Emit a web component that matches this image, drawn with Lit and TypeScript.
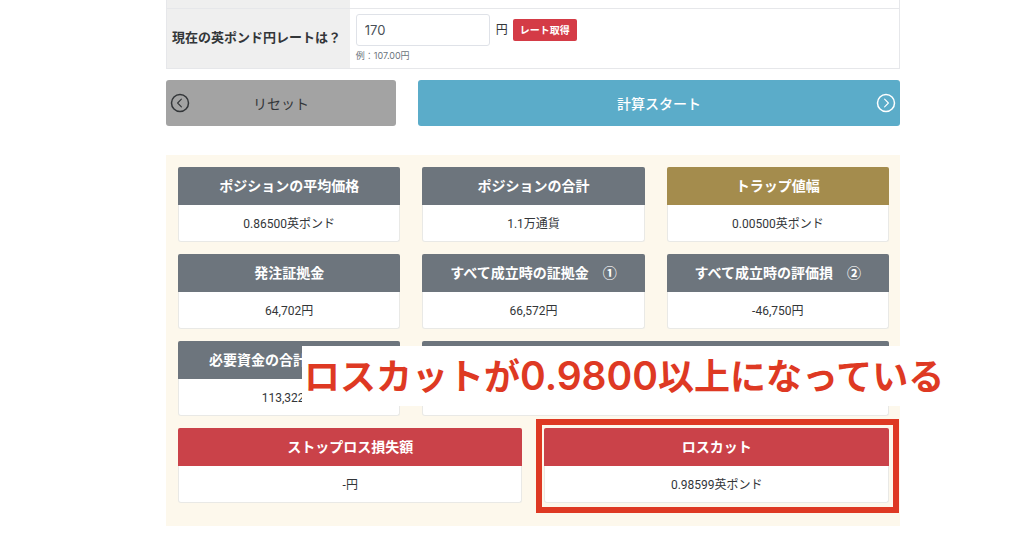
import { LitElement, html, css, nothing } from "lit";
import { customElement, property, state } from "lit/decorators.js";

interface Result {
  title: string;
  value: string;
  tone: "gray" | "gold" | "red";
  span: 2 | 3 | 4;
  marked?: boolean;
}

const RESULTS: Result[] = [
  { title: "ポジションの平均価格", value: "0.86500英ポンド", tone: "gray", span: 2 },
  { title: "ポジションの合計", value: "1.1万通貨", tone: "gray", span: 2 },
  { title: "トラップ値幅", value: "0.00500英ポンド", tone: "gold", span: 2 },
  { title: "発注証拠金", value: "64,702円", tone: "gray", span: 2 },
  { title: "すべて成立時の証拠金　①", value: "66,572円", tone: "gray", span: 2 },
  { title: "すべて成立時の評価損　②", value: "-46,750円", tone: "gray", span: 2 },
  { title: "必要資金の合計　① ＋ ②", value: "113,322円", tone: "gray", span: 2 },
  { title: "", value: "", tone: "gray", span: 4 },
  { title: "ストップロス損失額", value: "-円", tone: "red", span: 3 },
  { title: "ロスカット", value: "0.98599英ポンド", tone: "red", span: 3, marked: true },
];

@customElement("result-card")
class ResultCard extends LitElement {
  @property() heading = "";
  @property() value = "";
  @property() tone = "gray";
  @property({ type: Boolean }) marked = false;

  static styles = css`
    :host {
      display: block;
      position: relative;
    }
    .title {
      margin: 0;
      min-height: 22px;
      padding: 7px 0 9px;
      border-radius: 2px 2px 0 0;
      font-family: "Noto Sans CJK JP", sans-serif;
      font-size: 14px;
      line-height: 22px;
      font-weight: 700;
      text-align: center;
      white-space: pre;
      color: #fff;
    }
    .gray { background: #6d757d; }
    .gold { background: #a48c4d; }
    .red { background: #ca4249; }
    .value {
      margin: 0;
      min-height: 19px;
      padding: 10px 0 7px;
      border: 1px solid #e9e9e6;
      border-top: 0;
      border-radius: 0 0 3px 3px;
      background: #fff;
      font-family: Roboto, "Noto Sans CJK JP", sans-serif;
      font-size: 12px;
      line-height: 19px;
      text-align: center;
      color: #333639;
    }
    .frame {
      position: absolute;
      inset: -9px -10px -10px -8px;
      border: 6px solid #de3923;
      pointer-events: none;
    }
  `;

  render() {
    return html`
      <h2 class="title ${this.tone}">${this.heading}</h2>
      <p class="value">${this.value}</p>
      ${this.marked ? html`<div class="frame"></div>` : nothing}
    `;
  }
}

@customElement("app-root")
class AppRoot extends LitElement {
  @state() private rate = "170";

  static styles = css`
    :host {
      display: block;
      min-height: 100vh;
      box-sizing: border-box;
      padding: 0 124px 11px 166px;
      overflow-x: hidden;
      background: #fff;
      color: #333639;
      font-family: Inter, "Noto Sans CJK JP", sans-serif;
    }
    .form {
      width: 100%;
      border-collapse: collapse;
    }
    .form th,
    .form td {
      border: 1px solid #e6e7ea;
      border-top: 0;
      text-align: left;
    }
    .form th {
      width: 25%;
      padding: 0 0 4px 5px;
      background: #efefef;
      border-right: 0;
      font-size: 13px;
      line-height: 20px;
      font-weight: 700;
      white-space: nowrap;
    }
    .form td {
      padding: 5px 6px;
      border-left: 0;
    }
    .form .previous {
      height: 8px;
      padding: 0;
    }
    .entry {
      display: flex;
      align-items: center;
      font-size: 12px;
      line-height: 20px;
    }
    .rate {
      box-sizing: border-box;
      width: 134px;
      height: 32px;
      padding: 0 8px;
      border: 1px solid #dfe2e8;
      border-radius: 3px;
      background: #fff;
      font: 400 13px/20px Inter, "Noto Sans CJK JP", sans-serif;
      color: #495057;
    }
    .unit {
      margin: 0 5px 0 6px;
    }
    .fetch {
      height: 22px;
      padding: 0 7px;
      border: 0;
      border-radius: 2px;
      background: #d43b46;
      color: #fff;
      font: 700 10px/22px Inter, "Noto Sans CJK JP", sans-serif;
    }
    .hint {
      margin: 3px 0 0;
      font-size: 9px;
      line-height: 14px;
      color: #6c757d;
    }
    .actions {
      display: grid;
      grid-template-columns: 230fr 482fr;
      gap: 22px;
      margin-top: 11px;
    }
    .action {
      display: grid;
      grid-template-columns: 20px 1fr 20px;
      align-items: center;
      height: 46px;
      padding: 0 4px;
      border: 0;
      border-radius: 3px;
      font: 400 14px/20px "Noto Sans CJK JP", sans-serif;
    }
    .action svg {
      display: block;
      width: 20px;
      height: 20px;
      fill: none;
      stroke: currentColor;
      stroke-linecap: round;
      stroke-linejoin: round;
    }
    .action span {
      grid-column: 2;
    }
    .reset {
      background: #a3a3a3;
      color: #333639;
    }
    .start {
      background: #5bacc9;
      color: #fff;
      font-weight: 500;
    }
    .results {
      position: relative;
      display: grid;
      grid-template-columns: repeat(6, minmax(0, 1fr));
      gap: 12px 22px;
      margin-top: 29px;
      padding: 12px 11px 23px 12px;
      background: #fdf8ec;
    }
    .span2 { grid-column: span 2; }
    .span3 { grid-column: span 3; }
    .span4 { grid-column: span 4; }
    .note {
      position: absolute;
      top: 191px;
      left: 136px;
      margin: 0;
      padding: 0 4px 4px 2px;
      background: #fff;
      color: #de3923;
      font-family: "Noto Sans CJK JP", sans-serif;
      font-size: 36px;
      line-height: 56px;
      font-weight: 700;
      white-space: nowrap;
    }
    .figure {
      font-family: Inter, sans-serif;
      font-size: 39px;
      line-height: 1;
      font-weight: 600;
    }
  `;

  render() {
    return html`
      <table class="form">
        <tr>
          <th class="previous"></th>
          <td class="previous"></td>
        </tr>
        <tr>
          <th scope="row"><label for="rate">現在の英ポンド円レートは？</label></th>
          <td>
            <div class="entry">
              <input
                class="rate"
                id="rate"
                type="text"
                inputmode="decimal"
                .value=${this.rate}
                @input=${(e: Event) => (this.rate = (e.target as HTMLInputElement).value)}
              />
              <span class="unit">円</span>
              <button class="fetch" type="button">レート取得</button>
            </div>
            <p class="hint">例：107.00円</p>
          </td>
        </tr>
      </table>
      <div class="actions">
        <button class="action reset" type="button" @click=${() => (this.rate = "")}>
          <svg viewBox="0 0 20 20" aria-hidden="true">
            <circle cx="10" cy="10" r="8.5" stroke-width="1.5" />
            <path d="M11.4 6.2 7.6 10l3.8 3.8" stroke-width="1.1" />
          </svg>
          <span>リセット</span>
        </button>
        <button class="action start" type="button">
          <span>計算スタート</span>
          <svg viewBox="0 0 20 20" aria-hidden="true">
            <circle cx="10" cy="10" r="8.5" stroke-width="1.5" />
            <path d="M8.6 6.2 12.4 10l-3.8 3.8" stroke-width="1.1" />
          </svg>
        </button>
      </div>
      <section class="results">
        ${RESULTS.map(
          (r) => html`<result-card
            class="span${r.span}"
            .heading=${r.title}
            .value=${r.value}
            .tone=${r.tone}
            .marked=${r.marked ?? false}
          ></result-card>`
        )}
        <p class="note">ロスカットが<span class="figure">0.9800</span>以上になっている</p>
      </section>
    `;
  }
}
